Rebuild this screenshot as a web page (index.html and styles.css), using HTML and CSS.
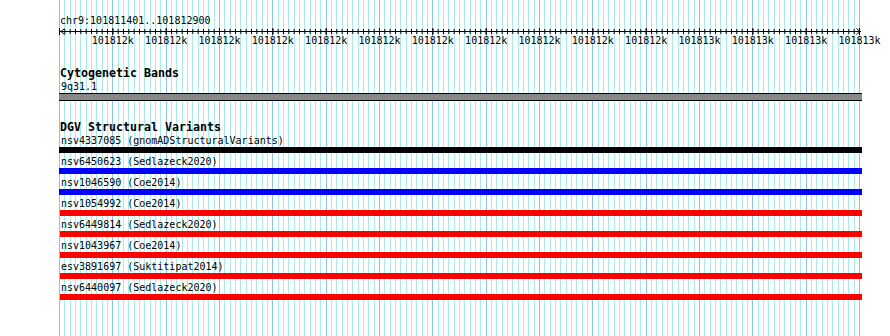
FILE: index.html
```html
<!DOCTYPE html>
<html lang="en">
<head>
  <meta charset="UTF-8">
  <title>chr9:101811401..101812900</title>
  <link rel="stylesheet" href="styles.css">
</head>
<body>
  <div class="panel">
    <div class="ruler">
      <div class="ruler-name">chr9:101811401..101812900</div>
      <svg class="axis" width="803" height="20">
        <line x1="1" y1="4.5" x2="802" y2="4.5" stroke="#000"/>
        <line x1="0" y1="4.5" x2="803" y2="4.5" stroke="#000" stroke-width="5" stroke-dasharray="1 4.3333"/>
        <line x1="0" y1="4.5" x2="803" y2="4.5" stroke="#000" stroke-width="7" stroke-dasharray="1 52.3333"/>
        <path d="M5.5 1.5 L2 4.5 L5.5 7.5" fill="none" stroke="#000"/>
        <path d="M797.5 1.5 L801 4.5 L797.5 7.5" fill="none" stroke="#000"/>
        <g class="axis-labels">
          <text x="53.8" y="17">101812k</text>
          <text x="107.2" y="17">101812k</text>
          <text x="160.5" y="17">101812k</text>
          <text x="213.8" y="17">101812k</text>
          <text x="267.2" y="17">101812k</text>
          <text x="320.5" y="17">101812k</text>
          <text x="373.8" y="17">101812k</text>
          <text x="427.2" y="17">101812k</text>
          <text x="480.5" y="17">101812k</text>
          <text x="533.8" y="17">101812k</text>
          <text x="587.2" y="17">101812k</text>
          <text x="640.5" y="17">101813k</text>
          <text x="693.8" y="17">101813k</text>
          <text x="747.2" y="17">101813k</text>
          <text x="800.5" y="17">101813k</text>
        </g>
      </svg>
    </div>

    <div class="track cyto">
      <div class="track-title">Cytogenetic Bands</div>
      <div class="feature-label">9q31.1</div>
      <div class="band"></div>
    </div>

    <div class="track dgv">
      <div class="track-title">DGV Structural Variants</div>

      <div class="feature-label">nsv4337085 (gnomADStructuralVariants)</div>
      <div class="bar bar-black"></div>

      <div class="feature-label">nsv6450623 (Sedlazeck2020)</div>
      <div class="bar bar-blue"></div>

      <div class="feature-label">nsv1046590 (Coe2014)</div>
      <div class="bar bar-blue"></div>

      <div class="feature-label">nsv1054992 (Coe2014)</div>
      <div class="bar bar-red"></div>

      <div class="feature-label">nsv6449814 (Sedlazeck2020)</div>
      <div class="bar bar-red"></div>

      <div class="feature-label">nsv1043967 (Coe2014)</div>
      <div class="bar bar-red"></div>

      <div class="feature-label">esv3891697 (Suktitipat2014)</div>
      <div class="bar bar-red"></div>

      <div class="feature-label">nsv6440097 (Sedlazeck2020)</div>
      <div class="bar bar-red"></div>
    </div>
  </div>
</body>
</html>
```

FILE: styles.css
```css
body {
  margin: 0;
  padding: 0;
  background: #fff;
  font-family: "DejaVu Sans Mono", "Liberation Mono", monospace;
  font-size: 10px;
  color: #000;
  overflow: hidden;
}

.panel {
  margin-left: 59px;
  width: 803px;
  height: 336px;
  background:
    repeating-linear-gradient(90deg, #88c4ec 0 1px, transparent 1px 53.3333px) 0 0 / 802px 100% no-repeat,
    repeating-linear-gradient(90deg, #a8ecec 0 1px, transparent 1px 5.3333px) 0 0 / 802px 100% no-repeat;
}

.ruler {
  padding-top: 14px;
}

.ruler-name {
  height: 13px;
  line-height: 13px;
  padding-left: 1px;
}

.axis {
  display: block;
  overflow: visible;
}

.axis-labels text {
  font-family: "DejaVu Sans Mono", "Liberation Mono", monospace;
  font-size: 10px;
  text-anchor: middle;
  fill: #000;
}

.track-title {
  font-weight: bold;
  font-size: 11.63px;
  height: 13px;
  line-height: 13px;
  padding-left: 1px;
}

.cyto {
  margin-top: 20px;
}

.feature-label {
  height: 13px;
  line-height: 13px;
  padding-left: 2px;
  white-space: nowrap;
}

.band {
  height: 6px;
  background: #888;
  border-top: 1px solid #000;
  border-bottom: 1px solid #000;
}

.dgv {
  margin-top: 20px;
}

.bar {
  height: 6px;
  margin-bottom: 2px;
}

.bar-black {
  background: #000;
}

.bar-blue {
  background: #0000ff;
}

.bar-red {
  background: #ff0000;
  margin-left: 1px;
}
```
